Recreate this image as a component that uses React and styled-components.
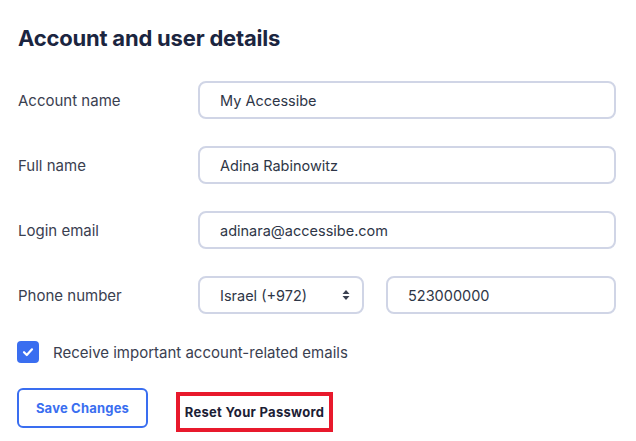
import React, { useState } from "react";
import styled, { createGlobalStyle } from "styled-components";

const GlobalStyle = createGlobalStyle`
  body {
    margin: 0;
    background: #ffffff;
    font-family: Inter, "Noto Sans", Arial, sans-serif;
  }
`;

const Page = styled.div`
  width: 636px;
  height: 441px;
  box-sizing: border-box;
  padding: 24px 20px 0 18px;
`;

const Title = styled.h2`
  margin: 0 0 29px;
  font-size: 22px;
  font-weight: 700;
  color: #1b2540;
  letter-spacing: -0.2px;
  line-height: 28px;
`;

const Row = styled.div`
  display: grid;
  grid-template-columns: 180px 1fr;
  align-items: center;
  height: 38px;
  margin-bottom: 27px;
`;

const Label = styled.label`
  font-size: 15px;
  color: #3a4050;
`;

const Input = styled.input`
  box-sizing: border-box;
  width: 100%;
  height: 38px;
  border: 2px solid #d0d5e6;
  border-radius: 8px;
  padding: 0 20px;
  font-family: inherit;
  font-size: 14.5px;
  color: #2e3647;
  outline: none;
`;

const PhoneGroup = styled.div`
  display: grid;
  grid-template-columns: 166px 1fr;
  gap: 22px;
`;

const SelectBox = styled.div`
  box-sizing: border-box;
  height: 38px;
  border: 2px solid #d0d5e6;
  border-radius: 8px;
  padding: 0 12px 0 20px;
  display: flex;
  align-items: center;
  justify-content: space-between;
  font-size: 14.5px;
  color: #2e3647;
`;

const CheckRow = styled.label`
  display: flex;
  align-items: center;
  gap: 14px;
  font-size: 15px;
  color: #3a4050;
  cursor: pointer;
`;

const Box = styled.span`
  width: 22px;
  height: 22px;
  border-radius: 4px;
  background: ${(p) => (p.checked ? "#3a6ef0" : "#fff")};
  display: flex;
  align-items: center;
  justify-content: center;
  margin-left: -1px;
`;

const Actions = styled.div`
  display: flex;
  align-items: flex-start;
  gap: 28px;
  margin-top: 25px;
  margin-left: -1px;
`;

const SaveButton = styled.button`
  box-sizing: border-box;
  width: 131px;
  height: 40px;
  border: 2px solid #3a6ef0;
  border-radius: 6px;
  background: #fff;
  color: #3a6ef0;
  font-family: inherit;
  font-size: 13px;
  font-weight: 700;
  letter-spacing: 0.2px;
  white-space: nowrap;
  padding: 0;
  cursor: pointer;
`;

const ResetButton = styled.button`
  box-sizing: border-box;
  width: 157px;
  height: 40px;
  margin-top: 4px;
  padding: 0;
  border: 4px solid #e8192c;
  background: #fff;
  color: #1b2035;
  font-family: inherit;
  font-size: 13px;
  font-weight: 700;
  letter-spacing: 0.3px;
  white-space: nowrap;
  cursor: pointer;
`;

const App = () => {
  const [checked, setChecked] = useState(true);

  return (
    <>
      <GlobalStyle />
      <Page>
        <Title>Account and user details</Title>
        <Row>
          <Label>Account name</Label>
          <Input defaultValue="My Accessibe" />
        </Row>
        <Row>
          <Label>Full name</Label>
          <Input defaultValue="Adina Rabinowitz" />
        </Row>
        <Row>
          <Label>Login email</Label>
          <Input defaultValue="adinara@accessibe.com" />
        </Row>
        <Row>
          <Label>Phone number</Label>
          <PhoneGroup>
            <SelectBox>
              <span>Israel (+972)</span>
              <svg width="8" height="12" viewBox="0 0 8 12">
                <path d="M4 1 L7.5 5 H0.5 Z" fill="#3a4050" />
                <path d="M4 11 L7.5 7 H0.5 Z" fill="#3a4050" />
              </svg>
            </SelectBox>
            <Input defaultValue="523000000" />
          </PhoneGroup>
        </Row>
        <CheckRow onClick={() => setChecked(!checked)}>
          <Box checked={checked}>
            {checked && (
              <svg width="12" height="10" viewBox="0 0 12 10">
                <path
                  d="M2 5.2 L4.8 8 L10 2.3"
                  stroke="#fff"
                  strokeWidth="2.2"
                  fill="none"
                  strokeLinecap="round"
                  strokeLinejoin="round"
                />
              </svg>
            )}
          </Box>
          Receive important account-related emails
        </CheckRow>
        <Actions>
          <SaveButton>Save Changes</SaveButton>
          <ResetButton>Reset Your Password</ResetButton>
        </Actions>
      </Page>
    </>
  );
};

export default App;
